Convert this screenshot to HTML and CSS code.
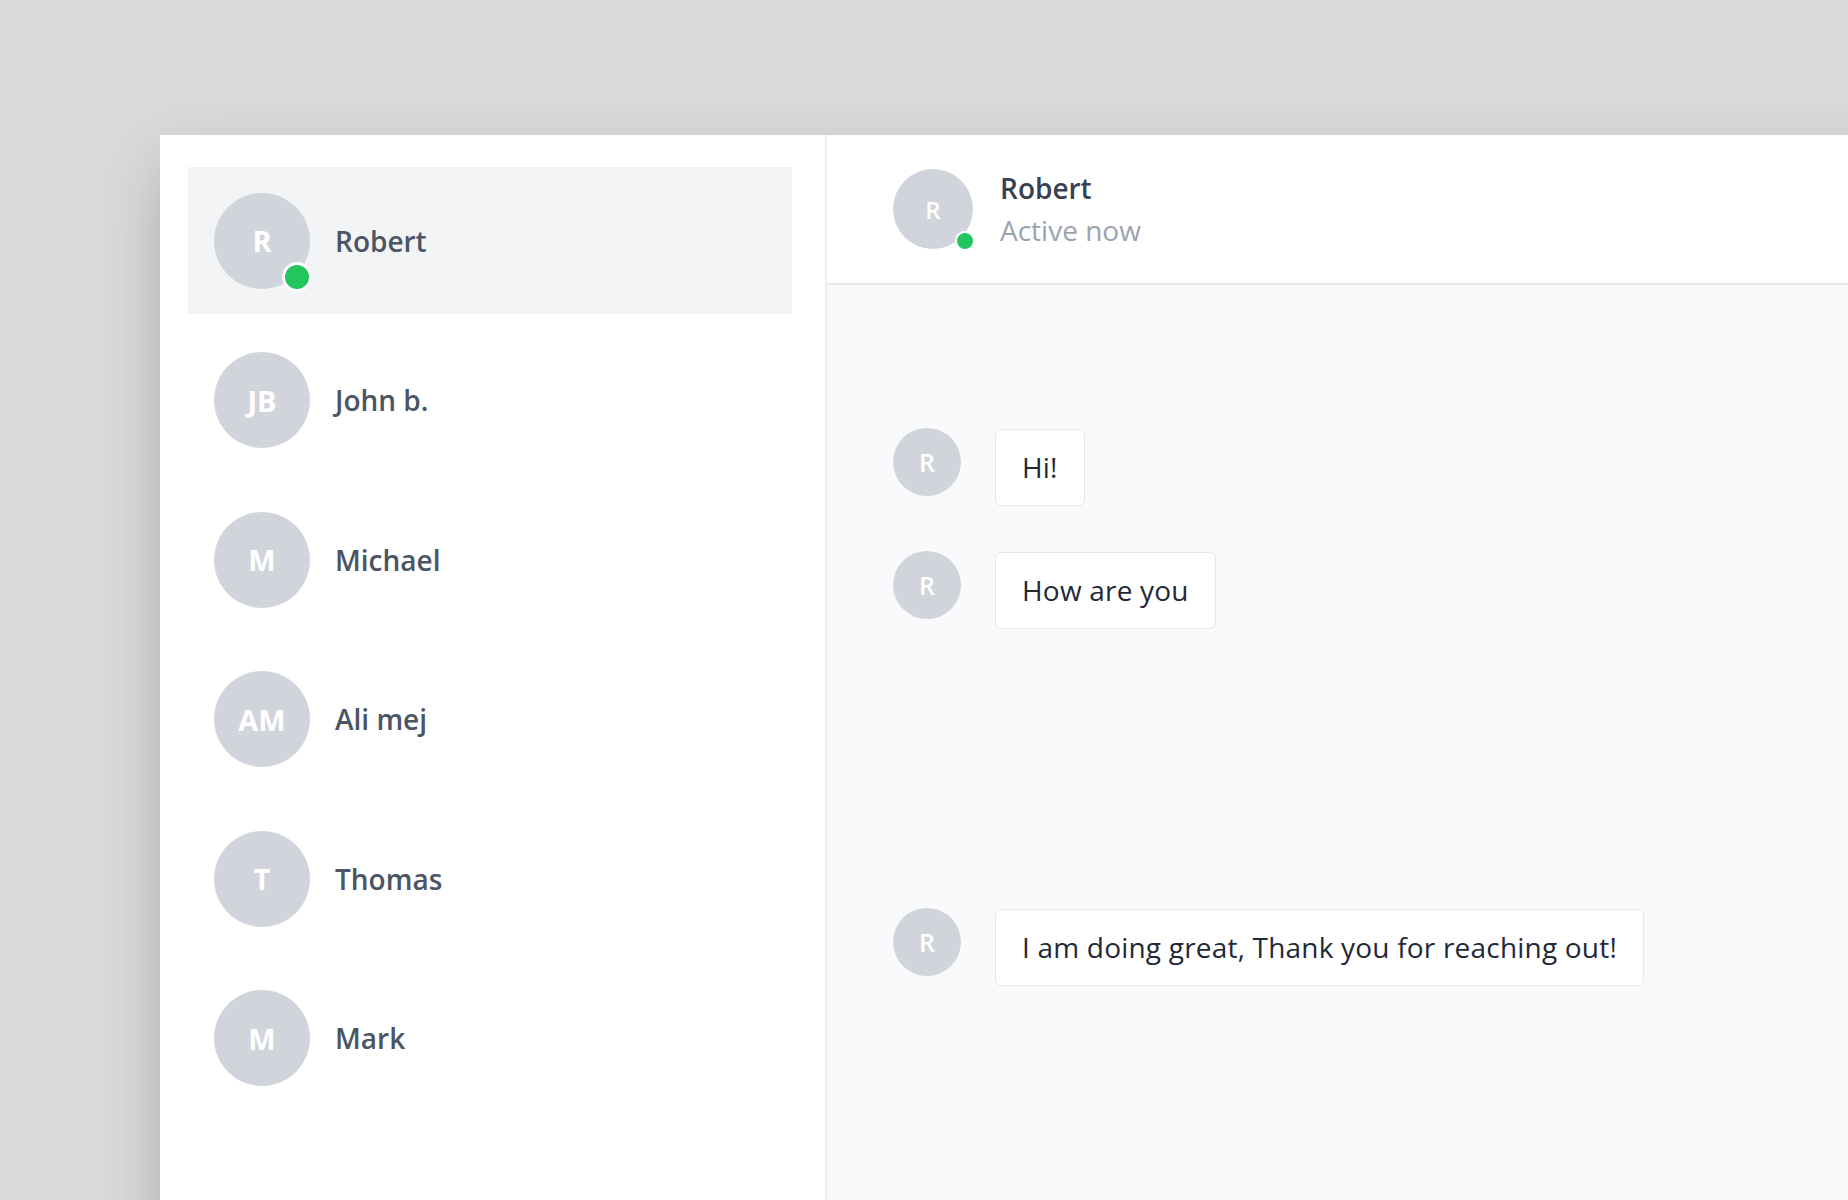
FILE: index.html
```html
<!DOCTYPE html>
<html lang="en">
<head>
<meta charset="utf-8">
<title>Chat</title>
<link rel="stylesheet" href="styles.css">
</head>
<body>
<div class="stage">
  <div class="window">
    <aside class="sidebar">
      <div class="contact active">
        <div class="avatar lg">R<span class="dot big"></span></div>
        <span class="name">Robert</span>
      </div>
      <div class="contact">
        <div class="avatar lg">JB</div>
        <span class="name">John b.</span>
      </div>
      <div class="contact">
        <div class="avatar lg">M</div>
        <span class="name">Michael</span>
      </div>
      <div class="contact">
        <div class="avatar lg">AM</div>
        <span class="name">Ali mej</span>
      </div>
      <div class="contact">
        <div class="avatar lg">T</div>
        <span class="name">Thomas</span>
      </div>
      <div class="contact">
        <div class="avatar lg">M</div>
        <span class="name">Mark</span>
      </div>
    </aside>
    <section class="chat">
      <header class="chat-header">
        <div class="avatar md">R<span class="dot small"></span></div>
        <div class="who">
          <div class="who-name">Robert</div>
          <div class="who-status">Active now</div>
        </div>
      </header>
      <div class="messages">
        <div class="msg">
          <div class="avatar sm">R</div>
          <div class="bubble">Hi!</div>
        </div>
        <div class="msg">
          <div class="avatar sm">R</div>
          <div class="bubble">How are you</div>
        </div>
        <div class="msg later">
          <div class="avatar sm">R</div>
          <div class="bubble">I am doing great, Thank you for reaching out!</div>
        </div>
      </div>
    </section>
  </div>
</div>
</body>
</html>
```

FILE: styles.css
```css
* { box-sizing: border-box; }

html, body {
  margin: 0;
  height: 100%;
}

body {
  background: #d9d9d9;
  overflow: hidden;
  font-family: "Open Sans", "Noto Sans", "Liberation Sans", sans-serif;
}

.stage {
  padding: 135px 0 0 160px;
}

.window {
  display: flex;
  width: 1800px;
  height: 1120px;
  background: #ffffff;
  box-shadow: 0 25px 60px -12px rgba(0, 0, 0, 0.3);
}

.sidebar {
  flex: 0 0 667px;
  border-right: 2px solid #eceef1;
  padding: 32px 33px 0 28px;
  display: flex;
  flex-direction: column;
  gap: 12.6px;
}

.contact {
  height: 147px;
  display: flex;
  align-items: center;
  gap: 25px;
  padding-left: 26px;
}

.contact.active {
  background: #f3f4f6;
}

.avatar {
  position: relative;
  flex: none;
  border-radius: 50%;
  background: #d1d5db;
  color: #ffffff;
  font-weight: 600;
  display: flex;
  align-items: center;
  justify-content: center;
}

.avatar.lg {
  width: 96px;
  height: 96px;
  font-size: 29px;
  font-weight: 700;
}

.avatar.md {
  width: 80px;
  height: 80px;
  font-size: 24px;
}

.avatar.sm {
  width: 68px;
  height: 68px;
  font-size: 25px;
}

.dot {
  position: absolute;
  border-radius: 50%;
  background: #22c55e;
  border-style: solid;
  border-color: #ffffff;
}

.dot.big {
  width: 30px;
  height: 30px;
  border-width: 3px;
  right: -2px;
  bottom: -3px;
}

.dot.small {
  width: 20px;
  height: 20px;
  border-width: 2px;
  right: -2px;
  bottom: -2px;
}

.name {
  font-size: 28px;
  font-weight: 600;
  color: #4b5563;
}

.chat {
  flex: 1;
  display: flex;
  flex-direction: column;
}

.chat-header {
  display: flex;
  align-items: center;
  gap: 27px;
  padding: 32px 66px 32px;
  border-bottom: 2px solid #e5e7eb;
  background: #ffffff;
}

.who {
  line-height: 42px;
  font-size: 28px;
}

.who-name {
  font-weight: 600;
  color: #374151;
}

.who-status {
  color: #9ca3af;
}

.messages {
  flex: 1;
  background: #f9fafb;
  padding: 143px 66px 0;
  display: flex;
  flex-direction: column;
  align-items: flex-start;
  gap: 45px;
}

.msg {
  display: flex;
  align-items: flex-start;
  gap: 34px;
}

.msg.later {
  margin-top: 234px;
}

.bubble {
  margin-top: 1px;
  background: #ffffff;
  border: 1px solid #e5e7eb;
  border-radius: 6px;
  padding: 16px 26px;
  line-height: 43px;
  font-size: 28px;
  letter-spacing: 0.2px;
  color: #1f2937;
}
```
